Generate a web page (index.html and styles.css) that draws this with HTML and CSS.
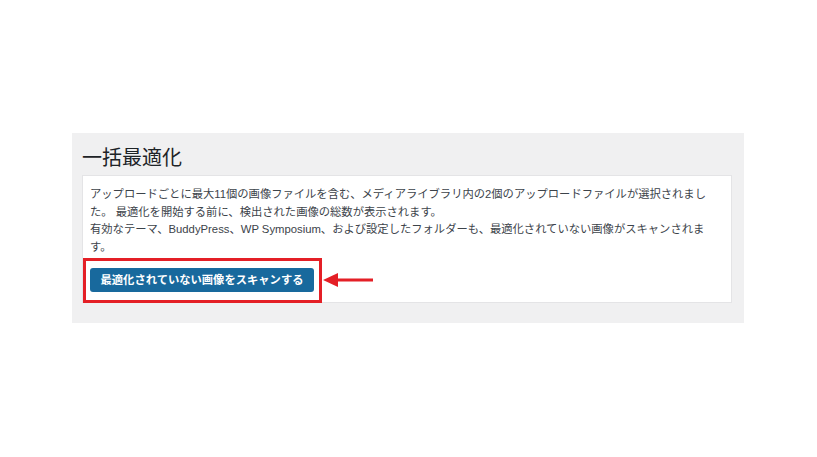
FILE: index.html
```html
<!DOCTYPE html>
<html lang="ja">
<head>
    <meta charset="UTF-8">
    <title>一括最適化</title>
    <link rel="stylesheet" href="styles.css">
</head>
<body>
    <div class="panel">
        <h1 class="panel-title">一括最適化</h1>
        <div class="card">
            <p class="card-text">アップロードごとに最大11個の画像ファイルを含む、メディアライブラリ内の2個のアップロードファイルが選択されまし<br>た。 最適化を開始する前に、検出された画像の総数が表示されます。<br>有効なテーマ、BuddyPress、WP Symposium、および設定したフォルダーも、最適化されていない画像がスキャンされま<br>す。</p>
            <div class="scan-row">
                <div class="highlight">
                    <div class="button-primary">最適化されていない画像をスキャンする</div>
                </div>
                <svg class="arrow" width="50" height="16" viewBox="0 0 50 16">
                    <polygon points="0,8 15,1 15,15" fill="#e41f26"/>
                    <rect x="13" y="6.5" width="37" height="3" fill="#e41f26"/>
                </svg>
            </div>
        </div>
    </div>
</body>
</html>
```

FILE: styles.css
```css
body {
    margin: 0;
    background: #fff;
    font-family: "Liberation Sans", "Noto Sans CJK JP", sans-serif;
}
.panel {
    margin: 133px 0 0 72px;
    width: 672px;
    box-sizing: border-box;
    padding: 12px 12px 20px 10px;
    background: #f0f0f1;
}
.panel-title {
    margin: 0 0 4px;
    font-size: 20px;
    line-height: 26px;
    font-weight: 400;
    color: #1d2327;
}
.card {
    background: #fff;
    border: 1px solid #e4e4e6;
    height: 128px;
    box-sizing: border-box;
    padding: 10px 7px 0;
}
.card-text {
    margin: 0;
    font-size: 11.3px;
    line-height: 17.7px;
    color: #3c434a;
    white-space: nowrap;
}
.scan-row {
    display: flex;
    align-items: center;
    margin: 1px 0 0 -7px;
}
.highlight {
    border: 3px solid #e41f26;
    padding: 7px 5px 8px 4px;
}
.button-primary {
    width: 224px;
    height: 24px;
    line-height: 24px;
    border-radius: 3px;
    background: #18699d;
    color: #fff;
    font-size: 11.3px;
    font-weight: 700;
    text-align: center;
}
.arrow {
    display: block;
    margin-left: 1px;
}
```
